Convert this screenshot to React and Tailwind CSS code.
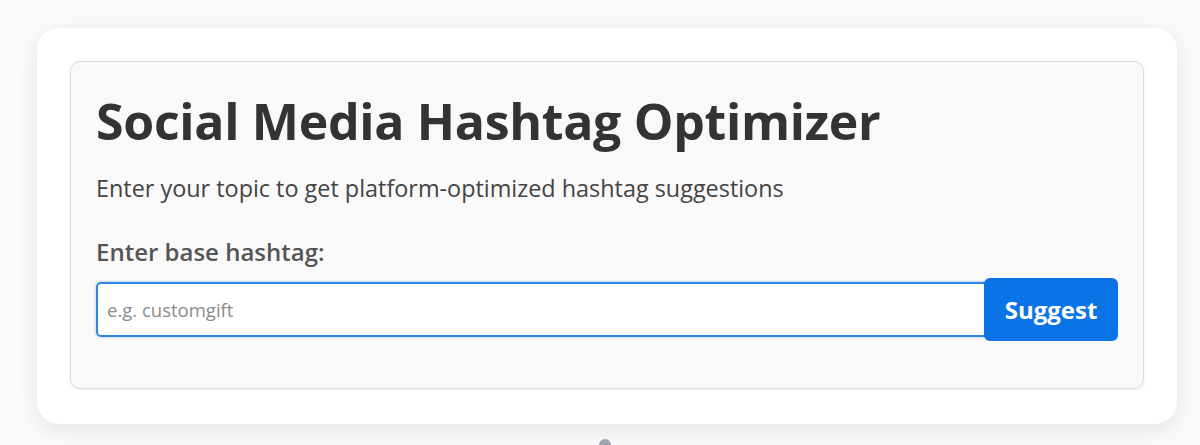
import { useState } from 'react'

export default function App() {
  const [tag, setTag] = useState('')

  return (
    <div className="min-h-screen bg-[#fafafa] pt-[28px] px-[37px] font-['Open_Sans',sans-serif] overflow-hidden relative">
      {/* outer panel */}
      <div className="w-[1140px] h-[396px] bg-white rounded-[22px] shadow-[0_6px_22px_rgba(0,0,0,0.09)] p-[33px]">
        {/* form card */}
        <div className="h-[328px] bg-[#f9f9f9] border border-[#dcdcdc] rounded-[10px] shadow-[0_1px_4px_rgba(0,0,0,0.06)] px-[25px] pt-[29px]">
          <h1 className="text-[50px] leading-[60px] font-bold text-[#333] tracking-[-0.3px]">
            Social Media Hashtag Optimizer
          </h1>
          <p className="mt-[22px] text-[23.4px] leading-[30px] text-[#444]">
            Enter your topic to get platform-optimized hashtag suggestions
          </p>
          <label className="block mt-[33px] text-[24px] leading-[32px] font-semibold text-[#555]">
            Enter base hashtag:
          </label>
          <div className="mt-[10px] flex items-center">
            <input
              autoFocus
              value={tag}
              onChange={(e) => setTag(e.target.value)}
              placeholder="e.g. customgift"
              className="flex-1 h-[55px] bg-white border-2 border-[#2f86e6] rounded-l-[5px] px-[9px] text-[18.5px] text-[#333] placeholder:text-[#8a8a8a] outline-none shadow-[0_0_3px_rgba(47,134,230,0.5)]"
            />
            <button className="w-[134px] h-[63px] bg-[#0a73e6] text-white text-[24px] font-bold rounded-[6px] -ml-[2px]">
              Suggest
            </button>
          </div>
        </div>
      </div>
      <div className="absolute left-[599px] top-[439px] w-[12px] h-[12px] rounded-full bg-[#9aa4b0]" />
    </div>
  )
}
